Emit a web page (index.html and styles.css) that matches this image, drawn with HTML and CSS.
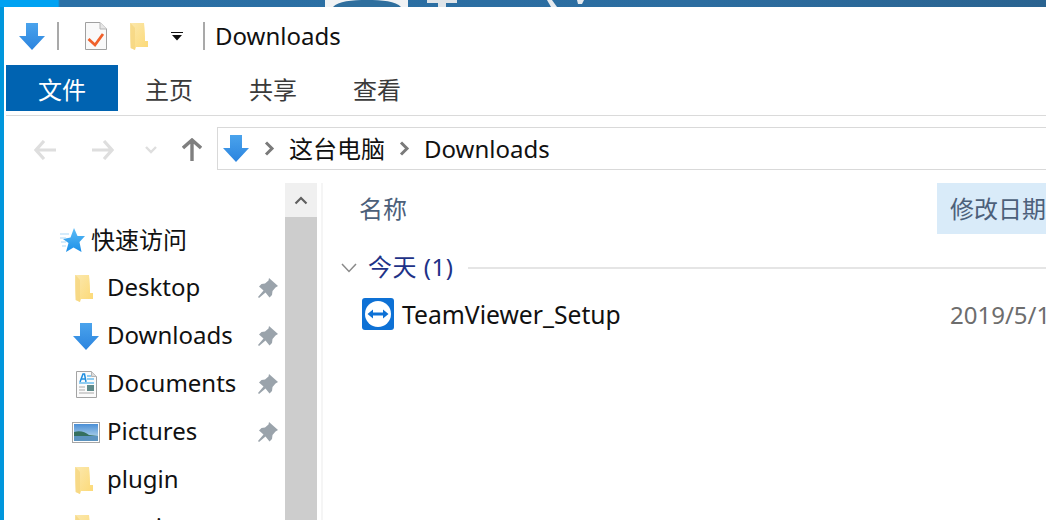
FILE: index.html
```html
<!DOCTYPE html>
<html lang="zh-CN">
<head>
	<meta charset="UTF-8">
	<title>Downloads</title>
	<link rel="stylesheet" href="styles.css">
</head>
<body>

<svg class="defs" width="0" height="0">
	<defs>
		<linearGradient id="arrowFill" x1="0" y1="0" x2="0" y2="1">
			<stop offset="0" stop-color="#4aa3ec"/>
			<stop offset="1" stop-color="#2b84df"/>
		</linearGradient>
		<linearGradient id="folderFront" x1="0" y1="0" x2="1" y2="1">
			<stop offset="0" stop-color="#fbe8ae"/>
			<stop offset="1" stop-color="#fcd975"/>
		</linearGradient>
		<linearGradient id="photoSky" x1="0" y1="0" x2="0" y2="1">
			<stop offset="0" stop-color="#4b8fd6"/>
			<stop offset="1" stop-color="#c9e3ee"/>
		</linearGradient>
		<linearGradient id="starFill" x1="0" y1="0" x2="0" y2="1">
			<stop offset="0" stop-color="#5cbcf6"/>
			<stop offset="1" stop-color="#1b8fe8"/>
		</linearGradient>
		<symbol id="arrow" viewBox="0 0 26 27">
			<path d="M7 0H19V13H26L13 27L0 13H7Z" fill="url(#arrowFill)"/>
		</symbol>
		<symbol id="folder" viewBox="0 0 18 27">
			<path d="M0 0H14C15 8 15 14 15 18H18V24H6L5 27L1 25C0 16 0 8 0 0Z" fill="url(#folderFront)"/>
			<path d="M5 5V27L0.5 25V0Z" fill="#f5d680" opacity=".75"/>
		</symbol>
		<symbol id="pin" viewBox="0 0 20 20">
			<path d="M11 0L20 8L17.500 9.500L14.500 13L14 17L11.500 19.500L7.500 14.500L1 20L0 19L5.500 12.500L1 8.500L3.500 6L7 5.500L10.500 2.500Z" fill="#9aa3ab"/>
		</symbol>
	</defs>
</svg>

<div class="wallpaper">
	<svg width="1046" height="7" viewBox="0 0 1046 7">
		<path d="M325 0H408V7H325Z" fill="#f0f2f4"/>
		<path d="M333 7C338 1 352 0 367 0C382 0 396 1 401 7Z" fill="#2f6f9e"/>
		<path d="M427 0H457V3H446V7H438V3H427Z" fill="#dfe4e8"/>
		<path d="M547 0H552L557 7H551Z" fill="#e6eaee"/>
		<path d="M577 0H584L582 4H578Z" fill="#e6eaee"/>
	</svg>
</div>

<div class="window">
	<div class="titlebar">
		<svg class="qa-arrow" width="26" height="27"><use href="#arrow"/></svg>
		<span class="qa-sep"></span>
		<svg class="qa-doc" width="22" height="28" viewBox="0 0 22 28">
			<path d="M.5.500H15L21.500 7V27.500H.5Z" fill="#f9f9f9" stroke="#a0a0a0"/>
			<path d="M15 .5V7H21.500" fill="#e6e6e6" stroke="#b5b5b5"/>
			<path d="M3.500 17L10 23L18 12" fill="none" stroke="#f0602a" stroke-width="2.800"/>
		</svg>
		<svg class="qa-folder" width="18" height="27"><use href="#folder"/></svg>
		<svg class="qa-drop" width="12" height="9" viewBox="0 0 12 9">
			<path d="M0 0H12V1H0ZM1 3H11L6 8.500Z" fill="#111"/>
		</svg>
		<span class="qa-sep qa-sep-last"></span>
		<span class="title">Downloads</span>
	</div>

	<div class="tabs">
		<div class="tab tab-file">文件</div>
		<div class="tab">主页</div>
		<div class="tab">共享</div>
		<div class="tab">查看</div>
	</div>

	<div class="toolbar">
		<svg class="nav-back" width="22" height="20" viewBox="0 0 22 20">
			<path d="M10 1L2 10L10 19M2 10H22" fill="none" stroke="#dedede" stroke-width="3.200"/>
		</svg>
		<svg class="nav-forward" width="22" height="20" viewBox="0 0 22 20">
			<path d="M12 1L20 10L12 19M20 10H0" fill="none" stroke="#dedede" stroke-width="3.200"/>
		</svg>
		<svg class="nav-recent" width="12" height="8" viewBox="0 0 12 8">
			<path d="M1 1L6 6L11 1" fill="none" stroke="#dedede" stroke-width="2.400"/>
		</svg>
		<svg class="nav-up" width="20" height="23" viewBox="0 0 20 23">
			<path d="M1 10L10 2L19 10M10 3V23" fill="none" stroke="#7f7f7f" stroke-width="3.400"/>
		</svg>
		<div class="address">
			<svg class="address-arrow" width="26" height="27"><use href="#arrow"/></svg>
			<svg class="crumb-sep" width="11" height="15" viewBox="0 0 11 15">
				<path d="M2 1.500L8 7.500L2 13.500" fill="none" stroke="#7a7a7a" stroke-width="3"/>
			</svg>
			<span class="crumb">这台电脑</span>
			<svg class="crumb-sep" width="11" height="15" viewBox="0 0 11 15">
				<path d="M2 1.500L8 7.500L2 13.500" fill="none" stroke="#7a7a7a" stroke-width="3"/>
			</svg>
			<span class="crumb">Downloads</span>
		</div>
	</div>

	<div class="main">
		<div class="sidebar">
			<div class="nav-head">
				<svg width="26" height="25" viewBox="0 0 26 25">
					<path d="M14 0L17.500 8L25 8L19.500 14L21.500 24L13.500 19.500L6 24L8.500 15L3 11L10.500 9.500Z" fill="url(#starFill)"/>
					<path d="M0 6H9M0 10H6M1 14H6M2 18H6" stroke="#a9d8f8" stroke-width="1.200"/>
				</svg>
				<span class="nav-label">快速访问</span>
			</div>
			<div class="nav-row">
				<span class="nav-icon"><svg class="nav-folder" width="18" height="27"><use href="#folder"/></svg></span>
				<span class="nav-label">Desktop</span>
				<svg class="pin" width="20" height="20"><use href="#pin"/></svg>
			</div>
			<div class="nav-row">
				<span class="nav-icon"><svg width="26" height="27"><use href="#arrow"/></svg></span>
				<span class="nav-label">Downloads</span>
				<svg class="pin" width="20" height="20"><use href="#pin"/></svg>
			</div>
			<div class="nav-row">
				<span class="nav-icon">
					<svg width="21" height="27" viewBox="0 0 21 27">
						<path d="M.5.500H15.500L20.500 5.500V26.500H.5Z" fill="#fbfbfb" stroke="#a3a3a3"/>
						<path d="M15.500.5V5.500H20.500" fill="#dcdcdc" stroke="#b5b5b5"/>
						<path d="M4 11L7 3H8.500L10 11M5 8H9" fill="none" stroke="#1f8fe0" stroke-width="1.500"/>
						<path d="M11 5H15M11 8H18M3 12H18" stroke="#27a0e8" stroke-width="1.200"/>
						<rect x="11" y="14" width="7" height="6" fill="#5f8a8a"/>
						<path d="M3 16H9M3 19H9M3 22H18" stroke="#a9a9a9" stroke-width="1.200"/>
					</svg>
				</span>
				<span class="nav-label">Documents</span>
				<svg class="pin" width="20" height="20"><use href="#pin"/></svg>
			</div>
			<div class="nav-row">
				<span class="nav-icon">
					<svg width="28" height="21" viewBox="0 0 28 21">
						<rect x=".5" y=".5" width="27" height="20" fill="#fff" stroke="#a6a6a6"/>
						<rect x="2" y="2" width="24" height="17" fill="url(#photoSky)"/>
						<path d="M2 10C8 8 13 10 17 13L26 14V19H2Z" fill="#35705f"/>
						<path d="M2 14H26V19H2Z" fill="#5b93bf"/>
					</svg>
				</span>
				<span class="nav-label">Pictures</span>
				<svg class="pin" width="20" height="20"><use href="#pin"/></svg>
			</div>
			<div class="nav-row">
				<span class="nav-icon"><svg class="nav-folder" width="18" height="27"><use href="#folder"/></svg></span>
				<span class="nav-label">plugin</span>
			</div>
			<div class="nav-row">
				<span class="nav-icon"><svg class="nav-folder" width="18" height="27"><use href="#folder"/></svg></span>
				<span class="nav-label">music</span>
			</div>
		</div>

		<div class="scrollbar">
			<div class="scroll-up">
				<svg width="14" height="9" viewBox="0 0 14 9">
					<path d="M1.500 7.500L7 2L12.500 7.500" fill="none" stroke="#606060" stroke-width="2.200"/>
				</svg>
			</div>
			<div class="scroll-thumb"></div>
		</div>

		<div class="content">
			<div class="columns">
				<div class="col-name">名称</div>
				<div class="col-date">修改日期</div>
			</div>
			<div class="group">
				<svg width="16" height="10" viewBox="0 0 16 10">
					<path d="M1 1L8 8.500L15 1" fill="none" stroke="#8a8a8a" stroke-width="1.500"/>
				</svg>
				<span class="group-label">今天 (1)</span>
				<span class="group-line"></span>
			</div>
			<div class="file">
				<svg class="file-icon" width="32" height="32" viewBox="0 0 32 32">
					<rect width="32" height="32" rx="3" fill="#0e71d5"/>
					<circle cx="16" cy="16" r="13" fill="#fff"/>
					<path d="M5.500 16L11 11.500V14.500H21V11.500L26.500 16L21 20.500V17.500H11V20.500Z" fill="#0e71d5"/>
				</svg>
				<span class="file-name">TeamViewer_Setup</span>
				<span class="file-date">2019/5/17</span>
			</div>
		</div>
	</div>
</div>

</body>
</html>
```

FILE: styles.css
```css
html,
body {
    margin: 0;
    height: 520px;
    overflow: hidden;
    background: #0096dc;
    font-family: "Noto Sans", "Noto Sans CJK SC", sans-serif;
    font-size: 24px;
    color: #111;
}
svg {
    display: block;
    flex: none;
}
.defs {
    position: absolute;
}

.wallpaper {
    height: 7px;
    background: linear-gradient(90deg, #00a2f2 0, #00a2f2 58px, #2a70a6 60px, #2c6da0 700px, #2a6390 1046px);
}

.window {
    margin-left: 4px;
    height: 513px;
    background: #fff;
    overflow: hidden;
}

.titlebar {
    display: flex;
    align-items: center;
    height: 58px;
    padding-left: 15px;
}
.qa-sep {
    width: 2px;
    height: 28px;
    margin-left: 12px;
    background: #a9a9a9;
}
.qa-doc {
    margin-left: 26px;
}
.qa-folder {
    margin-left: 23px;
}
.qa-drop {
    margin-left: 23px;
}
.qa-sep-last {
    margin-left: 20px;
}
.title {
    margin-left: 10px;
    line-height: 58px;
}

.tabs {
    display: flex;
    height: 46px;
    margin-left: 2px;
    padding-bottom: 4px;
    border-bottom: 1px solid #dadada;
}
.tab {
    width: 104px;
    line-height: 50px;
    text-align: center;
    color: #3a3a3a;
}
.tab-file {
    width: 112px;
    margin-right: -1px;
    background: #0063b1;
    color: #fff;
}

.toolbar {
    display: flex;
    align-items: center;
    height: 67px;
    padding-left: 30px;
}
.nav-forward {
    margin-left: 36px;
}
.nav-recent {
    margin-left: 31px;
}
.nav-up {
    margin-left: 25px;
}
.address {
    display: flex;
    align-items: center;
    flex: 1;
    height: 43px;
    margin-left: 15px;
    margin-bottom: 2px;
    padding-left: 5px;
    border: 1px solid #d9d9d9;
    border-right: 0;
    box-sizing: border-box;
    white-space: nowrap;
}
.crumb-sep {
    margin-left: 14px;
}
.address-arrow + .crumb-sep {
    margin-left: 15px;
}
.crumb {
    margin-left: 14px;
    line-height: 41px;
}

.main {
    display: flex;
    height: 337px;
}
.sidebar {
    width: 281px;
    flex: none;
    padding-top: 33px;
    box-sizing: border-box;
}
.nav-head {
    display: flex;
    align-items: center;
    gap: 5px;
    height: 48px;
    padding-left: 56px;
}
.nav-row {
    display: flex;
    align-items: center;
    gap: 7px;
    height: 48px;
    padding-left: 68px;
    padding-right: 7px;
}
.nav-label {
    padding-bottom: 4px;
}
.nav-icon {
    display: flex;
    justify-content: center;
    width: 28px;
}
.nav-folder {
    margin-right: 4px;
}
.pin {
    margin-left: auto;
}

.scrollbar {
    width: 32px;
    flex: none;
    background: #cdcdcd;
}
.scroll-up {
    display: flex;
    align-items: center;
    justify-content: center;
    height: 34px;
    background: #f0f0f0;
}

.content {
    flex: 1;
    min-width: 0;
    margin-left: 4px;
    border-left: 2px solid #f5f5f5;
    white-space: nowrap;
    overflow: hidden;
}
.columns {
    display: flex;
    height: 51px;
    line-height: 51px;
    color: #4c607a;
}
.col-name {
    width: 614px;
    padding-left: 36px;
    box-sizing: border-box;
}
.col-date {
    flex: 1;
    padding-left: 13px;
    background: #d9ebf9;
}
.group {
    display: flex;
    align-items: center;
    height: 48px;
    margin-top: 10px;
    padding-left: 18px;
}
.group-label {
    margin-left: 11px;
    padding-bottom: 6px;
    letter-spacing: .5px;
    color: #1e3287;
}
.group-line {
    flex: 1;
    height: 2px;
    margin-left: 15px;
    background: #e5e5e5;
}
.file {
    display: flex;
    align-items: center;
    height: 48px;
    margin-top: -2px;
    padding-left: 39px;
}
.file-name {
    flex: none;
    width: 548px;
    margin-left: 8px;
    font-size: 24.7px;
}
.file-date {
    flex: none;
    color: #6d6d6d;
}
```
